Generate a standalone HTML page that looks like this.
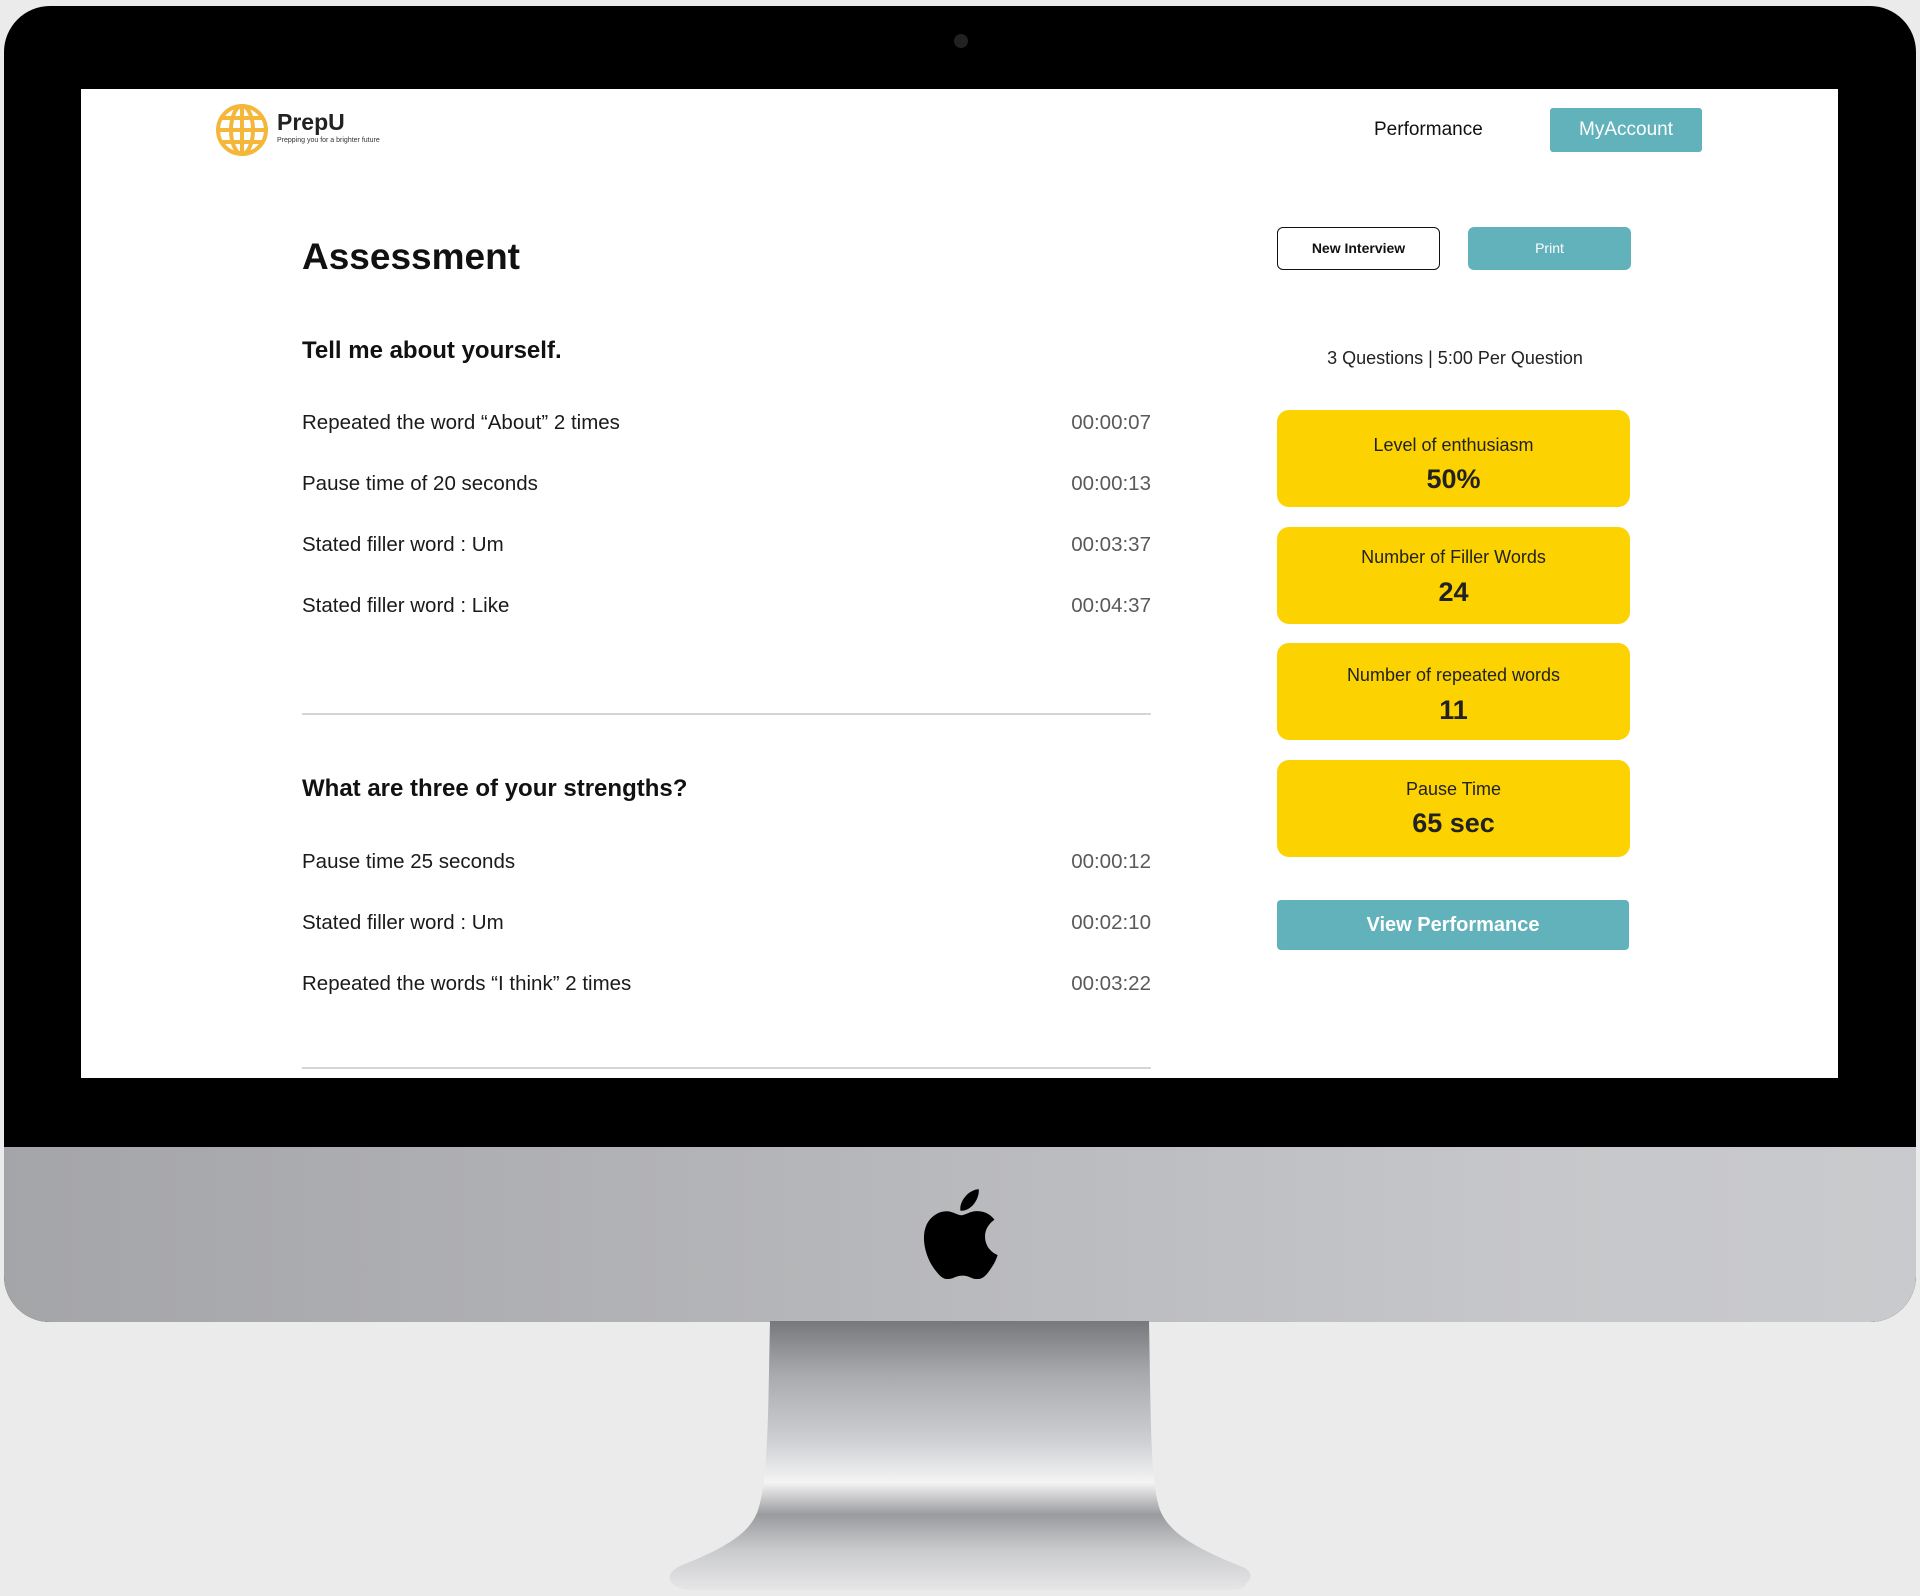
<!DOCTYPE html>
<html><head><meta charset="utf-8"><style>
*{margin:0;padding:0;box-sizing:border-box}
body{width:1920px;height:1596px;background:#ebebeb;position:relative;overflow:hidden;font-family:"Liberation Sans",sans-serif;color:#111}
.a{position:absolute}
#bezel{left:4px;top:6px;width:1912px;height:1316px;border-radius:46px;background:#000;overflow:hidden}
#chin{left:0;top:1141px;width:1912px;height:175px;background:linear-gradient(90deg,#a4a5a8,#b4b5b8 40%,#c6c7ca 80%,#c9cacd)}
#screen{left:81px;top:89px;width:1757px;height:989px;background:#fff}
.row{position:absolute;left:221px;width:849px;font-size:20.5px;color:#1a1a1a}
.row span{position:absolute;right:0;color:#5a5a5a}
.card{position:absolute;left:1196px;width:353px;height:97px;background:#fcd200;border-radius:12px;text-align:center}
.card .l{position:absolute;top:25px;width:100%;font-size:18px;color:#222}
.card .v{position:absolute;top:54px;width:100%;font-size:27px;font-weight:bold;color:#222}
.div{position:absolute;left:221px;width:849px;height:2px;background:#d5d5d5}
</style></head><body>
<div class="a" id="bezel">
  <div class="a" style="left:950px;top:28px;width:14px;height:14px;border-radius:50%;background:#222"></div>
  <div class="a" id="chin">
    <svg class="a" style="left:918px;top:42px" width="76" height="90" viewBox="0 0 170 200">
      <path fill="#000" d="M141 106c0-25 20-37 21-38-12-17-30-19-36-19-15-2-30 9-38 9-8 0-20-9-33-9-17 0-33 10-42 25-18 31-5 77 13 102 9 12 19 26 32 25 13-1 18-8 33-8 15 0 20 8 33 8 14 0 23-13 31-25 10-14 14-28 14-29-1 0-28-11-28-41zM116 33c7-9 12-21 11-33-10 0-23 7-30 16-7 8-13 20-11 32 12 1 23-6 30-15z"/>
    </svg>
  </div>
</div>
<svg class="a" style="left:660px;top:1321px" width="600" height="275" viewBox="660 1321 600 275">
  <defs><linearGradient id="g" x1="0" y1="0" x2="0" y2="1">
    <stop offset="0" stop-color="#77787c"/><stop offset="0.2" stop-color="#a9aaad"/><stop offset="0.45" stop-color="#cfd0d3"/><stop offset="0.6" stop-color="#f4f4f5"/><stop offset="0.72" stop-color="#9a9b9e"/><stop offset="0.85" stop-color="#c9cacc"/><stop offset="1" stop-color="#e6e6e7"/></linearGradient></defs>
  <path fill="url(#g)" d="M770 1321 L1149 1321 C1151 1420 1150 1480 1160 1510 C1170 1535 1200 1550 1245 1568 Q1256 1575 1245 1585 L1245 1586 Q1240 1590 1225 1590 L695 1590 Q675 1590 670 1580 Q668 1572 680 1566 C720 1550 750 1535 758 1510 C768 1480 768 1420 770 1321Z"/>
</svg>
<div class="a" id="screen">
  <svg class="a" style="left:134px;top:14px" width="54" height="54" viewBox="0 0 54 54" fill="none" stroke="#f4b73a" stroke-width="4">
    <circle cx="27" cy="27" r="24"/><ellipse cx="27" cy="27" rx="11" ry="24"/><line x1="27" y1="3" x2="27" y2="51"/><line x1="3" y1="27" x2="51" y2="27"/><path d="M7 15 H47 M7 39 H47"/>
  </svg>
  <div class="a" style="left:196px;top:20px;font-size:23px;font-weight:bold;color:#222">PrepU</div>
  <div class="a" style="left:196px;top:48px;font-size:7px;color:#333">Prepping you for a brighter future</div>
  <div class="a" style="left:1293px;top:30px;font-size:19px;color:#111">Performance</div>
  <div class="a" style="left:1469px;top:19px;width:152px;height:44px;background:#62b2bc;border-radius:3px;color:#fff;font-size:19px;text-align:center;line-height:44px">MyAccount</div>
  <div class="a" style="left:221px;top:147px;font-size:37px;font-weight:bold;color:#111">Assessment</div>
  <div class="a" style="left:1196px;top:138px;width:163px;height:43px;border:1.5px solid #111;border-radius:6px;font-size:14px;font-weight:bold;text-align:center;line-height:40px">New Interview</div>
  <div class="a" style="left:1387px;top:138px;width:163px;height:43px;background:#62b2bc;border-radius:6px;font-size:14px;color:#fff;text-align:center;line-height:43px">Print</div>
  <div class="a" style="left:1196px;top:259px;width:356px;text-align:center;font-size:18px;color:#222">3 Questions | 5:00 Per Question</div>
  <div class="card" style="top:321px"><div class="l">Level of enthusiasm</div><div class="v">50%</div></div>
  <div class="card" style="top:438px"><div class="l" style="top:20px">Number of Filler Words</div><div class="v" style="top:50px">24</div></div>
  <div class="card" style="top:554px"><div class="l" style="top:22px">Number of repeated words</div><div class="v" style="top:52px">11</div></div>
  <div class="card" style="top:671px"><div class="l" style="top:19px">Pause Time</div><div class="v" style="top:48px">65 sec</div></div>
  <div class="a" style="left:1196px;top:811px;width:352px;height:50px;background:#62b2bc;border-radius:4px;color:#fff;font-size:20px;font-weight:bold;text-align:center;line-height:50px">View Performance</div>
  <div class="a" style="left:221px;top:248px;font-size:24px;font-weight:bold">Tell me about yourself.</div>
  <div class="row" style="top:322px">Repeated the word “About” 2 times<span>00:00:07</span></div>
  <div class="row" style="top:383px">Pause time of 20 seconds<span>00:00:13</span></div>
  <div class="row" style="top:444px">Stated filler word : Um<span>00:03:37</span></div>
  <div class="row" style="top:505px">Stated filler word : Like<span>00:04:37</span></div>
  <div class="div" style="top:624px"></div>
  <div class="a" style="left:221px;top:686px;font-size:24px;font-weight:bold">What are three of your strengths?</div>
  <div class="row" style="top:761px">Pause time 25 seconds<span>00:00:12</span></div>
  <div class="row" style="top:822px">Stated filler word : Um<span>00:02:10</span></div>
  <div class="row" style="top:883px">Repeated the words “I think” 2 times<span>00:03:22</span></div>
  <div class="div" style="top:978px"></div>
</div>
</body></html>
